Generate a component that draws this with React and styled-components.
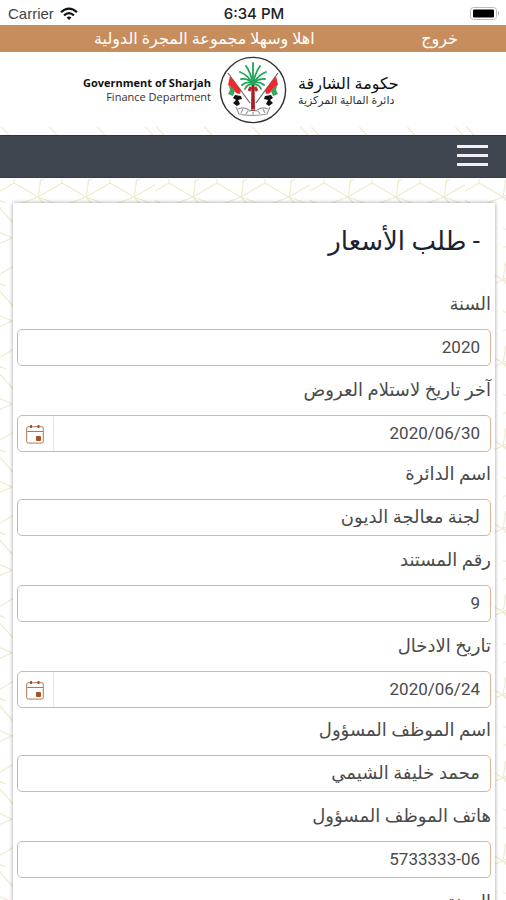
import React, { useState } from 'react';
import styled, { createGlobalStyle } from 'styled-components';

const GlobalStyle = createGlobalStyle`
  * {
    box-sizing: border-box;
  }

  body {
    margin: 0;
    background-color: #fff;
    font-family: Roboto, 'DejaVu Sans', sans-serif;
    color: #4a4a4a;
  }
`;

const Screen = styled.div`
  display: flex;
  flex-direction: column;
  height: 100vh;
  overflow: hidden;
`;

const StatusBar = styled.div`
  display: grid;
  grid-template-columns: 1fr auto 1fr;
  align-items: center;
  height: 25px;
  flex-shrink: 0;
  padding: 2px 6px 0 8px;
  font-family: 'Liberation Sans', sans-serif;
  font-size: 15px;
  color: #444;
`;

const StatusGroup = styled.div`
  display: flex;
  align-items: center;
  gap: 6px;
  justify-content: ${props => props.$end ? 'flex-end' : 'flex-start'};
`;

const Clock = styled.span`
  font-family: Inter, sans-serif;
  font-weight: 500;
  font-size: 15px;
  color: #222;
`;

const WelcomeBar = styled.div`
  display: flex;
  justify-content: space-between;
  align-items: center;
  height: 27px;
  flex-shrink: 0;
  padding: 0 48px 0 94px;
  background-color: #c88d5d;
  color: #fff;
  font-size: 16px;
  line-height: 24px;
`;

const LogoutLink = styled.a`
  color: #fff;
  text-decoration: none;
`;

const Brand = styled.header`
  display: grid;
  grid-template-columns: 1fr 68px 1fr;
  align-items: center;
  gap: 8px;
  height: 75px;
  flex-shrink: 0;
  background-color: #fff;
`;

const BrandText = styled.div`
  display: flex;
  flex-direction: column;
  align-items: ${props => props.$align};
  padding-left: 3px;
  font-family: 'Open Sans', 'DejaVu Sans', sans-serif;
  color: #333;
`;

const BrandName = styled.span`
  font-size: ${props => props.$arabic ? '16px' : '11px'};
  font-weight: ${props => props.$arabic ? 400 : 700};
  line-height: ${props => props.$arabic ? '20px' : '14px'};
  color: #111;
`;

const BrandUnit = styled.span`
  font-size: 11px;
  line-height: 14px;
`;

const Backdrop = styled.div`
  position: relative;
  display: flex;
  flex-direction: column;
  flex: 1;
  min-height: 0;
  padding-top: 8px;
`;

const PatternSvg = styled.svg`
  position: absolute;
  inset: 0;
  width: 100%;
  height: 100%;
  z-index: -1;
`;

const NavBar = styled.nav`
  display: flex;
  justify-content: flex-end;
  align-items: center;
  height: 43px;
  flex-shrink: 0;
  padding: 0 18px 2px;
  background-color: #3f4650;
  border-top: 1px solid #2b343b;
  border-bottom: 1px solid #3b3b42;
`;

const MenuButton = styled.button`
  display: flex;
  flex-direction: column;
  gap: 6px;
  padding: 0;
  border: none;
  background: none;
  cursor: pointer;
`;

const MenuLine = styled.span`
  width: 31px;
  height: 3px;
  background-color: #f0f0f4;
`;

const Content = styled.main`
  flex: 1;
  min-height: 0;
  padding: 25px 11px 0 13px;
  overflow-y: auto;
  scrollbar-width: none;
`;

const Card = styled.form`
  padding: 20px 4px;
  background-color: #fff;
  box-shadow: 0 0 4px rgba(0, 0, 0, 0.4);
`;

const Title = styled.h1`
  margin: 0 11px 33px;
  font-size: 26px;
  font-weight: 400;
  line-height: 36px;
  color: #1c2233;
`;

const Field = styled.div`
  margin-bottom: ${props => props.$date ? '10px' : '12px'};
`;

const FieldLabel = styled.label`
  display: block;
  margin-bottom: 13px;
  font-size: 18px;
  line-height: 24px;
`;

const InputBox = styled.div`
  display: flex;
  height: 37px;
  border: 1px solid #dfb294;
  border-radius: 5px;
  background-color: #fff;
  overflow: hidden;
`;

const FieldInput = styled.input`
  flex: 1;
  min-width: 0;
  padding: 0 10px 2px;
  border: none;
  outline: none;
  background: none;
  font-family: inherit;
  font-size: ${props => props.$numeric ? '17px' : '18px'};
  color: #4a4a4a;
  text-align: right;
`;

const DateButton = styled.button`
  display: flex;
  align-items: center;
  justify-content: center;
  width: 36px;
  padding: 0 2px 0 0;
  border: none;
  border-right: 1px solid #eee3dc;
  background: none;
  cursor: pointer;
`;

const WifiIcon = () => (
    <svg width="18" height="14" viewBox="0 0 18 14" fill="none" stroke="#111" strokeWidth="2.2">
        <path d="M1 5.2 Q9 -2 17 5.2" />
        <path d="M4 8.4 Q9 4 14 8.4" />
        <path d="M6.6 10.6 Q9 8.6 11.4 10.6 L9 13 Z" fill="#111" stroke="none" />
    </svg>
);

const BatteryIcon = () => (
    <svg width="30" height="14" viewBox="0 0 30 14">
        <rect x="0.5" y="0.5" width="26" height="12" rx="3" fill="#fff" stroke="#bbb" />
        <rect x="3" y="2.5" width="21" height="8" rx="1" fill="#000" />
        <path d="M28 4 Q30 6.5 28 9 Z" fill="#aaa" />
    </svg>
);

const CalendarIcon = () => (
    <svg width="18" height="20" viewBox="0 0 18 20" fill="none" stroke="#b8754c">
        <rect x="0.7" y="2.7" width="16.6" height="16.4" rx="1.5" />
        <path d="M1 7.5 H17" />
        <path d="M5 1 V4 M12.5 1 V4" stroke="#a9541f" strokeWidth="2" />
        <rect x="10" y="12" width="5" height="5" rx="1" fill="#a9541f" stroke="none" />
    </svg>
);

const Flag = () => (
    <g>
        <path d="M9 17 L31 47" stroke="#666" strokeWidth="1.2" />
        <path d="M11 20 L8 31 L13 36 L17 31 Z" fill="#fff" />
        <path d="M10 30 L14 31 L16 35 L14 40 L9 38 L11 34 Z" fill="#3aa55c" />
        <path d="M11 20 L22 34 L21 38 L17 37 L14 32 L9 29 Z" fill="#ee2a2c" />
        <path d="M16 39 L22 40 L23 43 L19 44 L21 48 L18 50 L14 47 L17 44 L14 42 Z" fill="#111" />
    </g>
);

const Emblem = () => (
    <svg width="68" height="68" viewBox="0 0 68 68" role="img" aria-label="Government of Sharjah">
        <circle cx="34" cy="34" r="32.6" fill="#fff" stroke="#333" strokeWidth="1.4" />
        <Flag />
        <g transform="translate(68 0) scale(-1 1)">
            <Flag />
        </g>
        <path d="M32.5 28 H35.5 L36 55 H32 Z" fill="#a91e22" />
        <path d="M30 35 L32 31 M38 35 L36 31" stroke="#b3272a" strokeWidth="3" />
        <g fill="none" stroke="#22a45a" strokeWidth="1.8" strokeLinecap="round">
            <path d="M34 28 V7" />
            <path d="M34 28 Q32 17 27 10 M34 28 Q36 17 41 10" />
            <path d="M34 28 Q29 19 21 16 M34 28 Q39 19 47 16" />
            <path d="M34 27 Q28 22 22 23 M34 27 Q40 22 46 23" />
            <path d="M34 27 Q27 25 23 29 M34 27 Q41 25 45 29" />
            <path d="M34 28 Q28 28 26 33 M34 28 Q40 28 42 33" />
        </g>
        <g fill="none" stroke="#999" strokeWidth="1.2">
            <path d="M17 51 L20 58 Q34 61 48 58 L51 51" />
            <path d="M19 53 Q26 50 31 55 Q34 52 37 55 Q42 50 49 53" />
            <path d="M22 57 L24 53 M27 58 L29 55 M34 59 V56 M41 58 L39 55 M46 57 L44 53" />
        </g>
    </svg>
);

const Pattern = () => (
    <PatternSvg aria-hidden="true">
        <defs>
            <pattern id="lattice" width="155" height="83" patternUnits="userSpaceOnUse">
                <g fill="none" stroke="#f0ebcf" strokeWidth="1.2">
                    {[-10, 38, 86, 134].map(x => (
                        <g key={x}>
                            <path d={`M${x} 70 L${x + 24} 56 L${x + 48} 70`} />
                            <path d={`M${x + 24} 56 V52 M${x} 70 L${x + 3} 52 M${x + 1} 55 L${x + 6} 52`} />
                            <path d={`M${x} 70 L${x - 16} 76 M${x} 70 L${x + 16} 76`} />
                            <path d={`M${x} 70 L${x + 24} 97 M${x} -13 L${x + 24} 14`} />
                            <path d={`M${x} 18 L${x + 22} 28 L${x} 38`} />
                        </g>
                    ))}
                </g>
            </pattern>
        </defs>
        <rect width="100%" height="100%" fill="url(#lattice)" />
    </PatternSvg>
);

const initialFields = [
    { id: 'year', label: 'السنة', value: '2020', numeric: true },
    { id: 'lastDate', label: 'آخر تاريخ لاستلام العروض', value: '2020/06/30', numeric: true, date: true },
    { id: 'department', label: 'اسم الدائرة', value: 'لجنة معالجة الديون' },
    { id: 'document', label: 'رقم المستند', value: '9', numeric: true },
    { id: 'entryDate', label: 'تاريخ الادخال', value: '2020/06/24', numeric: true, date: true },
    { id: 'employee', label: 'اسم الموظف المسؤول', value: 'محمد خليفة الشيمي' },
    { id: 'phone', label: 'هاتف الموظف المسؤول', value: '5733333-06', numeric: true },
    { id: 'job', label: 'المهنة', value: '' },
];

const App = () => {
    const [fields, setFields] = useState(initialFields);

    const handleChange = (id, value) => {
        setFields(fields.map(field => field.id === id ? { ...field, value } : field));
    };

    return (
        <Screen>
            <GlobalStyle />
            <StatusBar>
                <StatusGroup>Carrier <WifiIcon /></StatusGroup>
                <Clock>6:34 PM</Clock>
                <StatusGroup $end><BatteryIcon /></StatusGroup>
            </StatusBar>
            <WelcomeBar>
                <span dir="rtl">اهلا وسهلا مجموعة المجرة الدولية</span>
                <LogoutLink href="#logout">خروج</LogoutLink>
            </WelcomeBar>
            <Brand>
                <BrandText $align="flex-end">
                    <BrandName>Government of Sharjah</BrandName>
                    <BrandUnit>Finance Department</BrandUnit>
                </BrandText>
                <Emblem />
                <BrandText $align="flex-start" lang="ar">
                    <BrandName $arabic>حكومة الشارقة</BrandName>
                    <BrandUnit>دائرة المالية المركزية</BrandUnit>
                </BrandText>
            </Brand>
            <Backdrop>
                <Pattern />
                <NavBar>
                    <MenuButton type="button" aria-label="القائمة">
                        <MenuLine />
                        <MenuLine />
                        <MenuLine />
                    </MenuButton>
                </NavBar>
                <Content dir="rtl" lang="ar">
                    <Card onSubmit={(e) => e.preventDefault()}>
                        <Title>- طلب الأسعار</Title>
                        {fields.map(field => (
                            <Field key={field.id} $date={field.date}>
                                <FieldLabel htmlFor={field.id}>{field.label}</FieldLabel>
                                <InputBox>
                                    <FieldInput
                                        id={field.id}
                                        type="text"
                                        dir={field.numeric ? 'ltr' : 'rtl'}
                                        $numeric={field.numeric}
                                        value={field.value}
                                        onChange={(e) => handleChange(field.id, e.target.value)}
                                    />
                                    {field.date && (
                                        <DateButton type="button" aria-label={field.label}>
                                            <CalendarIcon />
                                        </DateButton>
                                    )}
                                </InputBox>
                            </Field>
                        ))}
                    </Card>
                </Content>
            </Backdrop>
        </Screen>
    );
};

export default App;
